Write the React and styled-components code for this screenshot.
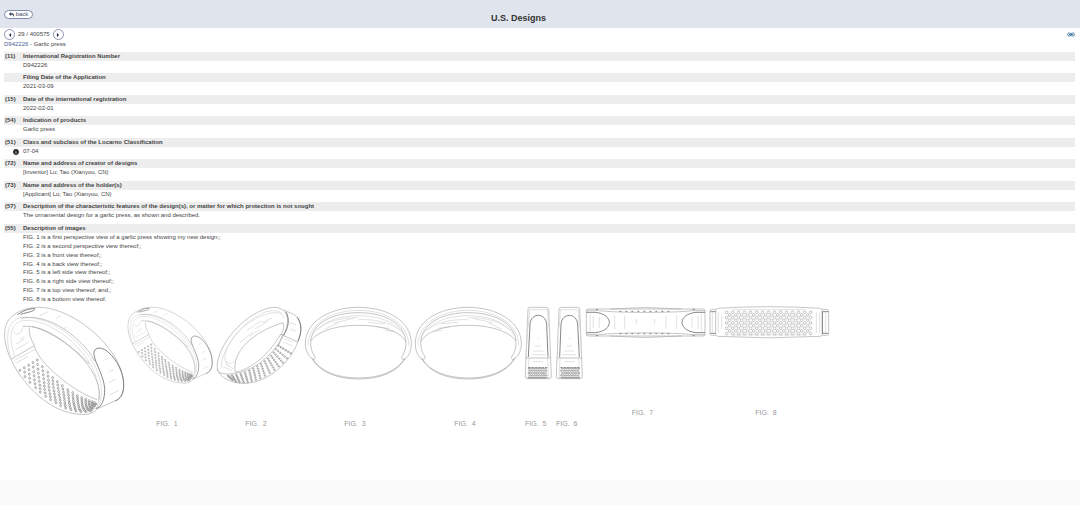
import React from 'react'

import styled, { createGlobalStyle } from 'styled-components';
import { FaReply, FaInfoCircle, FaCaretLeft, FaCaretRight } from 'react-icons/fa';

const GlobalStyle = createGlobalStyle`
* { box-sizing: border-box; }
body {
margin:0;
background-color:#fafafa;
color:#444;
font-family:"Liberation Sans", Arial, sans-serif;
font-size:6px;
line-height:9px;
}
`;

const Header = styled.header`
display:grid;
grid-template-columns:40px 1fr 87px;
align-items:center;
height:28px;
padding-left:4px;
background-color:#e0e4ed;
`;

const BackButton = styled.button`
display:flex;
align-items:center;
justify-content:center;
gap:2px;
width:29px;
height:9px;
padding:0;
border:1px solid #7f89a8;
border-radius:5px;
background-color:white;
color:#444c68;
font:inherit;
line-height:7px;
`;

const Title = styled.h1`
margin:0;
padding-top:7px;
text-align:center;
color:#333;
font-size:9px;
line-height:12px;
`;

const Main = styled.main`
padding:0 5px 49px 4px;
background-color:white;
`;

const Toolbar = styled.div`
display:flex;
align-items:center;
justify-content:space-between;
padding-top:1px;
height:12px;
`;

const Pager = styled.div`
display:flex;
align-items:center;
gap:3px;
`;

const RoundButton = styled.button`
display:flex;
align-items:center;
justify-content:center;
width:11px;
height:11px;
padding:0;
border:1px solid #8a94b2;
border-radius:50%;
background-color:white;
color:#222c50;
font-size:6px;
`;

const ShareLink = styled.a`
display:flex;
color:#4c7fa6;
`;

const Crumb = styled.p`
margin:0;
padding-bottom:3px;
`;

const DocLink = styled.a`
color:#4a5c94;
text-decoration:none;
`;

const Field = styled.section`
&:nth-of-type(even) { padding-bottom:4px; }
&:nth-of-type(odd) { padding-bottom:3px; }
`;

const FieldHead = styled.div`
display:grid;
grid-template-columns:18px 1fr;
background-color:#ededed;
font-weight:bold;
padding-left:1px;
`;

const FieldName = styled.h2`
margin:0;
font-size:6px;
line-height:9px;
`;

const FieldBody = styled.div`
display:grid;
grid-template-columns:19px 1fr;
align-items:center;
`;

const IconCell = styled.span`
display:flex;
justify-content:flex-end;
padding-right:4px;
color:#222;
`;

const Lines = styled.ul`
display:grid;
grid-auto-rows:1fr;
align-items:center;
height:70px;
margin:0;
padding:0;
list-style:none;
line-height:8px;
`;

const Gallery = styled.div`
display:flex;
align-items:flex-start;
gap:4px;
margin-top:1px;
`;

const Figure = styled.figure`
flex:none;
width:${p => p.$width}px;
margin:0;
`;

const Drawing = styled.svg`
display:block;
width:100%;
height:${p => p.$height}px;
overflow:visible;
fill:none;
stroke:#a8a8a8;
stroke-width:2;
.dark { stroke:#6a6a6a; stroke-width:2.4; }
.soft { stroke:#d2d2d2; }
.holes { stroke:#808080; }
`;

const Caption = styled.figcaption`
padding-right:6px;
text-align:center;
white-space:pre;
color:#999;
font-size:7px;
line-height:14px;
`;

const fields = [
  { code: '(11)', name: 'International Registration Number', value: 'D942226' },
  { code: '', name: 'Filing Date of the Application', value: '2021-03-09' },
  { code: '(15)', name: 'Date of the international registration', value: '2022-02-01' },
  { code: '(54)', name: 'Indication of products', value: 'Garlic press' },
  { code: '(51)', name: 'Class and subclass of the Locarno Classification', value: '07-04', info: true },
  { code: '(72)', name: 'Name and address of creator of designs', value: '[Inventor] Lu; Tao (Xianyou, CN)' },
  { code: '(73)', name: 'Name and address of the holder(s)', value: '[Applicant]  Lu; Tao (Xianyou, CN)' },
  { code: '(57)', name: 'Description of the characteristic features of the design(s), or matter for which protection is not sought', value: 'The ornamental design for a garlic press, as shown and described.' },
];

const imageLines = [
  'FIG. 1 is a first perspective view of a garlic press showing my new design;;',
  'FIG. 2 is a second perspective view thereof;;',
  'FIG. 3 is a front view thereof;;',
  'FIG. 4 is a back view thereof;;',
  'FIG. 5 is a left side view thereof;;',
  'FIG. 6 is a right side view thereof;;',
  'FIG. 7 is a top view thereof; and,;',
  'FIG. 8 is a bottom view thereof.',
];

// holes spread between a lower and an upper edge, one pair per column
function spread(lower, upper, count) {
  const out = [];
  lower.forEach(([x1, y1], i) => {
    const [x2, y2] = upper[i];
    for (let k = 0; k < count; k++) {
      const t = k / (count - 1);
      out.push([x1 + (x2 - x1) * t, y1 + (y2 - y1) * t]);
    }
  });
  return out;
}

// adds a hole in the middle of every four neighbours
function stagger(points, count) {
  const out = points.slice();
  for (let i = 0; i + count < points.length; i++) {
    if (i % count === count - 1) continue;
    const four = [points[i], points[i + 1], points[i + count], points[i + count + 1]];
    out.push([
      four.reduce((sum, p) => sum + p[0], 0) / 4,
      four.reduce((sum, p) => sum + p[1], 0) / 4,
    ]);
  }
  return out;
}

const ringHoles = stagger(spread(
  [[60, 211], [75, 230], [90, 247], [107, 263], [121, 276], [137, 289], [152, 299], [168, 308], [182, 317], [197, 324], [213, 329], [228, 333], [243, 335], [258, 335], [272, 333]],
  [[112, 180], [127, 200], [143, 217], [158, 233], [172, 245], [187, 257], [203, 269], [218, 278], [232, 287], [245, 293], [257, 298], [267, 302], [276, 305], [283, 308], [288, 312]],
  5
), 5);

const backHoles = spread(
  [[68, 240], [78, 245], [89, 247], [101, 247], [113, 246], [125, 243], [138, 239], [151, 234], [165, 227], [179, 218], [193, 209], [206, 199], [219, 188], [231, 175], [242, 160]],
  [[54, 227], [66, 226], [79, 225], [92, 222], [105, 218], [118, 212], [130, 206], [142, 199], [153, 192], [164, 184], [174, 176], [183, 167], [191, 158], [198, 148], [205, 137]],
  6
);

function Holes({ points, rx, ry }) {
  return (
    <g className="holes">
      {points.map(([x, y], i) => <ellipse key={i} cx={x} cy={y} rx={rx} ry={ry} />)}
    </g>
  );
}

function RingView() {
  return (
    <g>
      <path d="M33 178C18 148 8 106 18 76C28 42 74 21 120 22C190 24 270 78 316 132C350 172 372 215 371 257C371 276 365 290 350 300L291 327C280 341 262 345 240 343C180 340 118 300 75 245C56 222 42 199 33 178Z" />
      <path className="soft" d="M33 178C20 130 16 84 42 62C76 38 144 60 196 96C252 138 300 204 304 262C306 290 302 312 290 326" />
      <path className="soft" d="M44 168C30 128 26 88 52 68C84 50 140 68 190 104C242 142 288 204 296 262C298 286 298 304 290 322" />
      <path d="M64 55C120 42 190 76 238 124C262 146 276 166 284 184" />
      <path className="soft" d="M42 94C46 110 64 102 68 84" />
      <path d="M68 80C120 70 200 122 250 178C286 220 304 264 297 300" />
      <path d="M88 82C86 102 94 120 103 136C106 156 130 188 152 208C196 250 244 282 291 299" />
      <path d="M96 80C150 92 216 138 268 192" />
      <path d="M33 178L103 137" />
      <path className="dark" d="M283 168C276 144 298 136 322 154C354 180 373 226 371 260C370 284 360 297 346 303" />
      <path className="dark" d="M283 168C286 190 311 226 314 266C315 298 304 325 287 325" />
      <path className="dark" d="M52 44C68 34 84 25 104 26C106 34 84 36 62 43" />
      <path className="soft" d="M42 182L106 148M120 47l24-12M168 56l14-8M188 88l12-7M310 182l14-8M326 216l16-8M326 248l20-10M330 284l26-12M48 132l26-16M46 150l40-24M50 188l34-18M60 118l12-8" />
      <Holes points={ringHoles} rx={2.6} ry={3.4} />
    </g>
  );
}

function BackRingView() {
  return (
    <g>
      <path d="M22 208C16 150 84 58 160 29C192 16 222 22 230 45C240 72 222 112 196 144C158 190 110 221 54 222C36 222 25 218 22 208Z" />
      <path className="soft" d="M34 204C32 150 92 66 166 36C200 26 220 36 222 56" />
      <path className="soft" d="M58 198C26 180 56 118 106 76C150 44 200 28 214 44M46 182C58 196 66 188 72 184M90 128l40-34M110 92l44-30M136 86l38-22M120 108l30-20M156 68l30-14M40 200l26 12M48 192l24 16" />
      <path d="M76 216C64 158 126 96 219 68C224 84 220 92 210 106C178 160 128 206 76 217Z" />
      <path className="dark" d="M228 36C240 56 236 84 220 106" />
      <path d="M222 30L250 43C266 50 278 76 272 96L263 126L213 103M218 102L206 136M263 126C246 182 172 252 100 250C66 250 30 234 22 208" />
      <path className="dark" d="M262 52C276 72 275 102 264 124" />
      <path className="soft" d="M204 136L245 160M236 68l22 6M240 88l18 5M222 116l24 10M220 126l28 12" />
      <Holes points={backHoles} rx={2.4} ry={2} />
    </g>
  );
}

function FrontView() {
  return (
    <g>
      <path d="M23 157C6 144 1 126 1 109C1 44 75 1 160 1C250 1 319 44 319 109C319 128 313 147 300 157C292 160 288 154 291 147C302 132 304 116 302 98C292 42 230 17 160 17C92 17 28 42 18 96C16 116 18 132 29 147C32 154 29 160 23 157Z" />
      <path className="soft" d="M9 116C8 52 78 10 160 10C246 10 312 52 311 116M19 88C50 44 100 26 160 26C226 26 276 46 302 90M36 68C70 40 110 32 160 32M160 38C210 36 250 44 286 70M60 66l40-18M86 48l60-14M190 46l50 4M216 60l36 4M240 70l26 4" />
      <path d="M17 102C38 72 96 55 160 55C232 55 284 72 303 104" />
      <path d="M20 152C46 194 98 213 160 213C224 213 276 194 301 152" />
      <path d="M22 157C48 197 98 216 160 216C224 216 274 197 299 157" />
    </g>
  );
}

function SideView() {
  const dots = [];
  for (let r = 0; r < 5; r++) {
    for (let c = 0; c < 8; c++) dots.push([12 + c * 7 + (r % 2) * 3, 184 + r * 7]);
  }
  return (
    <g>
      <path d="M9 6Q9 1 16 1H64Q70 1 71 7L79 208Q79 215 72 215H7Q1 215 1 208L3 152Z" />
      <path className="soft" d="M13 8H67M9 26L3 152M14 8L10 60M67 8L70 60M12 152L9 214M68 152L71 214M40 92v4M30 117h18M26 132h30M22 143h40M24 164h30" />
      <path d="M1 153H77" />
      <path className="dark" d="M10 150L15 52C18 16 62 16 65 52L69 150" />
      <path className="dark" strokeDasharray="7 3" d="M10 182H70" />
      <path d="M10 212H70" />
      <Holes points={dots} rx={2.5} ry={2} />
    </g>
  );
}

function TopView() {
  return (
    <g>
      <path d="M6 6H351Q357 6 357 12V81Q357 87 351 87H6Q1 87 1 81V12Q1 6 6 6ZM72 6Q178-3 287 6M72 87Q178 96 287 87" />
      <path d="M1 11H40C90 18 268 18 318 11H357M1 83H40C90 76 268 76 318 83H357" />
      <path className="dark" d="M1 16H28C84 22 84 71 28 77H1M357 16H330C274 22 274 71 330 77H357" />
      <path className="dark" strokeDasharray="6 12" d="M100 13H262M100 80H262M30 7h8M320 7h8M30 86h8M320 86h8" />
      <path className="soft" d="M12 20V74M22 28V64M40 30V62M86 26V66M116 26V66M151 36V50M206 36V50M240 26V66M272 26V66M318 30V62M336 26V66M346 20V74" />
    </g>
  );
}

function BottomView() {
  const dots = [];
  for (let r = 0; r < 9; r++) {
    for (let c = 0; c < (r % 2 ? 14 : 15); c++) dots.push([53 + c * 18 + (r % 2) * 9, 16 + r * 8]);
  }
  return (
    <g>
      <path d="M26 4Q180-6 334 4Q340 5 340 12V80Q340 87 334 88Q180 97 26 88Q20 87 20 80V12Q20 5 26 4Z" />
      <path d="M20 7H8Q3 7 3 13V79Q3 85 8 85H20M340 7H352Q359 7 359 13V79Q359 85 352 85H340" />
      <path className="dark" d="M4 14H20M4 79H20M340 14H358M340 79H358M340 14V79" />
      <path className="soft" d="M10 16V78M28 16V78M38 26V66M322 16V78M332 16V78M350 16V78M70 8H290M70 84H290" />
      <g>
        {dots.map(([x, y], i) => <circle key={i} cx={x} cy={y} r={4} />)}
      </g>
    </g>
  );
}

function ChainIcon() {
  return (
    <svg width="8" height="5" viewBox="0 0 16 10" fill="none" stroke="currentColor" strokeWidth="2">
      <rect x="1" y="2" width="7" height="6" rx="3" />
      <rect x="8" y="2" width="7" height="6" rx="3" />
      <path d="M4 5H12" />
    </svg>
  );
}

const figures = [
  { width: 119, height: 110, box: '12 21 357 330', view: RingView, label: 'Garlic press' },
  { width: 86, height: 110, box: '10 21 364 466', view: RingView, caption: 'FIG.  1' },
  { width: 84, height: 110, box: '21 21 252 330', view: BackRingView, caption: 'FIG.  2' },
  { width: 106, height: 110, box: '0 0 318 330', view: FrontView, caption: 'FIG.  3' },
  { width: 106, height: 110, box: '0 0 318 330', view: FrontView, flip: 320, caption: 'FIG.  4' },
  { width: 27, height: 110, box: '0 0 81 330', view: SideView, caption: 'FIG.  5' },
  { width: 26, height: 110, box: '0 0 78 330', view: SideView, flip: 80, caption: 'FIG.  6' },
  { width: 119, height: 99, box: '0 0 357 297', view: TopView, caption: 'FIG.  7' },
  { width: 120, height: 99, box: '0 0 360 297', view: BottomView, caption: 'FIG.  8' },
];

function DesignField({ code, name, info, children }) {
  return (
    <Field>
      <FieldHead>
        <span>{code}</span>
        <FieldName>{name}</FieldName>
      </FieldHead>
      <FieldBody>
        <IconCell>{info && <FaInfoCircle />}</IconCell>
        {children}
      </FieldBody>
    </Field>
  );
}

export default class App extends React.Component {
  render() {
    return (
      <div>
        <GlobalStyle />
        <Header>
          <BackButton type="button"><FaReply size={5} />back</BackButton>
          <Title>U.S. Designs</Title>
        </Header>
        <Main>
          <Toolbar>
            <Pager>
              <RoundButton type="button" aria-label="Previous"><FaCaretLeft /></RoundButton>
              <span>29 / 400575</span>
              <RoundButton type="button" aria-label="Next"><FaCaretRight /></RoundButton>
            </Pager>
            <ShareLink href="#link" aria-label="Permanent link"><ChainIcon /></ShareLink>
          </Toolbar>
          <Crumb><DocLink href="#D942226">D942226</DocLink> - Garlic press</Crumb>
          {fields.map(f => (
            <DesignField key={f.name} code={f.code} name={f.name} info={f.info}>
              <span>{f.value}</span>
            </DesignField>
          ))}
          <DesignField code="(55)" name="Description of images">
            <Lines>
              {imageLines.map(line => <li key={line}>{line}</li>)}
            </Lines>
          </DesignField>
          <Gallery>
            {figures.map((f, i) => {
              const View = f.view;
              return (
                <Figure key={i} $width={f.width}>
                  <Drawing $height={f.height} viewBox={f.box} preserveAspectRatio="xMinYMin meet" role="img" aria-label={f.caption || f.label}>
                    <g transform={f.flip ? `translate(${f.flip} 0) scale(-1 1)` : undefined}>
                      <View />
                    </g>
                  </Drawing>
                  {f.caption && <Caption>{f.caption}</Caption>}
                </Figure>
              );
            })}
          </Gallery>
        </Main>
      </div>
    );
  }
}
